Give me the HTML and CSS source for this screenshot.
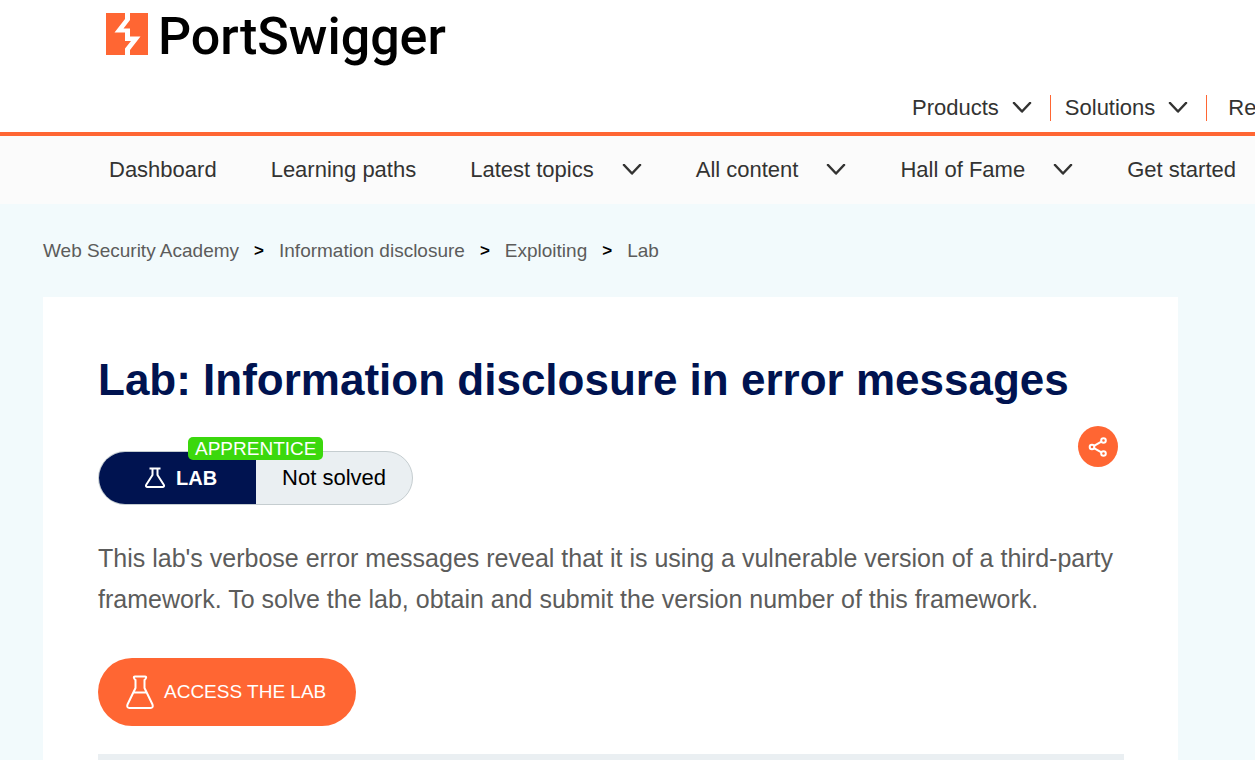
FILE: index.html
```html
<!DOCTYPE html>
<html lang="en">
<head>
<meta charset="utf-8">
<title>Lab: Information disclosure in error messages</title>
<link rel="stylesheet" href="styles.css">
</head>
<body>
<svg class="defs" aria-hidden="true">
  <symbol id="chevron" viewBox="0 0 20 12"><path d="M2 1l8 8.500 8-8.500" fill="none" stroke="currentColor" stroke-width="2.500" stroke-linecap="round" stroke-linejoin="round"/></symbol>
</svg>
<header class="header">
  <a class="logo" href="#">
    <svg class="logo-mark" viewBox="0 0 42 42" aria-hidden="true"><path fill="#ff6633" d="M0 0H42V42H0z"/><path fill="#fff" d="M19 0H24V7L17.500 15.500H24V23.500H34.500L24 37V42H19V35.500L25 28H19V19.500H8.500L19 6z"/></svg>
    <span class="logo-text">PortSwigger</span>
  </a>
  <nav class="main-nav" aria-label="Main">
    <a class="main-item" href="#">Products <svg class="chevron"><use href="#chevron"/></svg></a>
    <a class="main-item" href="#">Solutions <svg class="chevron"><use href="#chevron"/></svg></a>
    <a class="main-item" href="#">Research</a>
  </nav>
</header>
<nav class="sub-nav" aria-label="Academy">
  <a class="sub-item" href="#">Dashboard</a>
  <a class="sub-item" href="#">Learning paths</a>
  <a class="sub-item" href="#">Latest topics <svg class="chevron"><use href="#chevron"/></svg></a>
  <a class="sub-item" href="#">All content <svg class="chevron"><use href="#chevron"/></svg></a>
  <a class="sub-item" href="#">Hall of Fame <svg class="chevron"><use href="#chevron"/></svg></a>
  <a class="sub-item" href="#">Get started</a>
</nav>
<div class="page">
  <nav class="breadcrumbs" aria-label="Breadcrumb">
    <a href="#">Web Security Academy</a><span class="sep">&gt;</span><a href="#">Information disclosure</a><span class="sep">&gt;</span><a href="#">Exploiting</a><span class="sep">&gt;</span><a href="#">Lab</a>
  </nav>
  <main class="card">
    <h1 class="title">Lab: Information disclosure in error messages</h1>
    <div class="status-row">
      <div class="status">
        <span class="level">APPRENTICE</span>
        <div class="pill">
          <span class="pill-lab"><svg class="flask-small" viewBox="0 0 20 22" fill="none" stroke="#fff" stroke-width="2" stroke-linejoin="round" aria-hidden="true"><path d="M4.500 1.500H15.500M7.500 1.500V8L1.400 17.500C.600 19 1 20 2.500 20H17.500C19 20 19.400 19 18.600 17.500L12.500 8V1.500"/></svg>LAB</span>
          <span class="pill-state">Not solved</span>
        </div>
      </div>
      <button class="share" type="button" aria-label="Share">
        <svg viewBox="0 0 20 20" fill="none" stroke="#fff" stroke-width="2" aria-hidden="true"><circle cx="4" cy="10" r="2.300"/><circle cx="15.500" cy="3.500" r="2.300"/><circle cx="15.500" cy="16.500" r="2.300"/><path d="M6 8.900L13.400 4.600M6 11.100L13.400 15.400"/></svg>
      </button>
    </div>
    <p class="description">This lab's verbose error messages reveal that it is using a vulnerable version of a third-party framework. To solve the lab, obtain and submit the version number of this framework.</p>
    <a class="access" href="#"><svg class="flask" viewBox="0 0 28 34" fill="none" stroke="#fff" stroke-width="2" stroke-linejoin="round" aria-hidden="true"><path d="M9 1.500H19Q20.500 1.500 20 3Q19.500 4.500 18.500 5V13L26.500 29.500Q27.500 33 24.500 33H3.500Q.500 33 1.500 29.500L9.500 13V5Q8.500 4.500 8 3Q7.500 1.500 9 1.500zM7.500 17.500H20.500"/></svg>ACCESS THE LAB</a>
    <div class="rule"></div>
  </main>
</div>
</body>
</html>
```

FILE: styles.css
```css
* { box-sizing: border-box; }
html { background: #f2fafc; }
body {
  margin: 0;
  overflow-x: hidden;
  font-family: "Liberation Sans", Arial, sans-serif;
  font-size: 22px;
  color: #333332;
}
a { color: inherit; text-decoration: none; }
.defs { display: none; }
.header {
  background: #fff;
  border-bottom: 4px solid #ff6633;
  overflow: hidden;
}
.logo {
  display: flex;
  align-items: flex-start;
  gap: 10px;
  height: 84px;
  padding: 13px 0 0 106px;
}
.logo-mark { width: 42px; height: 42px; }
.logo-text {
  font-family: Roboto, sans-serif;
  font-weight: 500;
  font-size: 52px;
  line-height: 48px;
  color: #000;
}
.main-nav {
  display: flex;
  align-items: center;
  height: 48px;
  padding-left: 912px;
}
.main-item {
  display: flex;
  align-items: center;
  gap: 13px;
  height: 26px;
  margin-right: 14px;
  padding-right: 18px;
  border-right: 1px solid #ff6633;
}
.main-item:last-child { margin: 0; border: 0; padding-left: 7px; }
.chevron { flex: none; width: 20px; height: 12px; }
.sub-nav {
  display: flex;
  align-items: center;
  gap: 54px;
  height: 68px;
  padding-left: 109px;
  background: #fbfbfb;
  white-space: nowrap;
}
.sub-item { display: flex; align-items: center; gap: 28px; }
.page { padding: 33px 77px 0 43px; }
.breadcrumbs {
  display: flex;
  gap: 15px;
  font-size: 19px;
  line-height: 27px;
  color: #5c5c5b;
}
.sep { color: #000; font-weight: 700; font-size: 17px; }
.card { margin-top: 33px; padding: 55px 54px 0 55px; background: #fff; }
.title {
  margin: 0;
  font-size: 44px;
  line-height: 56px;
  color: #001350;
}
.status-row {
  display: flex;
  justify-content: space-between;
  align-items: flex-start;
  padding: 18px 6px 0 0;
}
.status { position: relative; padding-top: 25px; }
.level {
  position: absolute;
  top: 11px;
  left: 90px;
  padding: 0 7px;
  border-radius: 5px;
  background: #3bd80d;
  color: #fff;
  font-size: 19px;
  line-height: 23px;
}
.pill {
  display: flex;
  height: 54px;
  border: 1px solid #c5cdd0;
  border-radius: 27px;
  overflow: hidden;
  background: #eaeff2;
}
.pill-lab {
  display: flex;
  align-items: center;
  gap: 11px;
  padding: 0 39px 0 46px;
  background: #001350;
  color: #fff;
  font-size: 20px;
  font-weight: 700;
}
.flask-small { width: 20px; height: 22px; }
.pill-state {
  display: flex;
  align-items: center;
  padding: 0 26px;
  color: #000;
}
.share {
  display: grid;
  place-items: center;
  width: 40px;
  height: 41px;
  padding: 0;
  border: 0;
  border-radius: 50%;
  background: #ff6633;
}
.share svg { width: 20px; height: 20px; }
.description {
  margin: 33px 0 0;
  font-size: 25px;
  line-height: 41px;
  color: #5c5c5b;
}
.access {
  display: inline-flex;
  align-items: center;
  gap: 10px;
  height: 68px;
  margin-top: 38px;
  padding: 0 30px 0 28px;
  border-radius: 34px;
  background: #ff6633;
  color: #fff;
  font-size: 19px;
}
.flask { width: 28px; height: 34px; }
.rule { height: 8px; margin-top: 28px; background: #eaeff2; }
```
